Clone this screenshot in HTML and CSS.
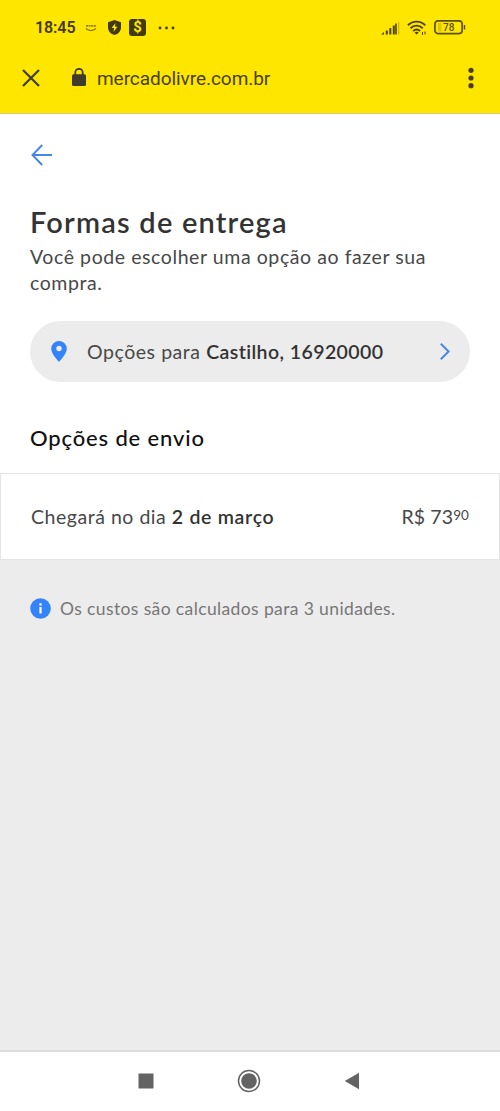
FILE: index.html
```html
<!DOCTYPE html>
<html lang="pt-BR">
<head>
<meta charset="utf-8">
<title>Formas de entrega</title>
<link rel="stylesheet" href="styles.css">
</head>
<body>
<header class="top">
  <div class="status">
    <span class="clock">18:45</span>
    <svg class="smile" width="12" height="8" viewBox="0 0 12 8" fill="none" stroke="#8f7d00"><path d="M1 1.800h10" stroke-width="1.800" stroke-dasharray="2 .6"/><path d="M.8 4.600c2.800 2.600 7.400 2.600 10.200 0" stroke-width="1.300"/></svg>
    <svg class="shield" width="13" height="15" viewBox="0 0 13 15"><path d="M6.500 0 13 2.300v5.200c0 3.700-2.800 6.500-6.500 7.500C2.800 14 0 11.200 0 7.500V2.300z" fill="#43390a"/><path d="M7.400 3 3.700 8h2.400l-.6 4 3.900-5.200H7z" fill="#ffe600"/></svg>
    <span class="cash">$</span>
    <svg class="more" width="17" height="4" viewBox="0 0 17 4" fill="#43390a"><circle cx="2" cy="2" r="1.400"/><circle cx="8.500" cy="2" r="1.400"/><circle cx="15" cy="2" r="1.400"/></svg>
    <svg class="signal" width="19" height="14" viewBox="0 0 19 14" fill="#4d420a"><path d="M0 13.500 3 11v2.500zM4.800 9.500h2v4h-2zM8.300 7h2v6.500h-2zM11.800 4.500h2v9h-2zM14.200 2.500h1.600v11h-1.600z"/><path d="M17 1h1.300v12.500H17z" opacity=".28"/></svg>
    <svg class="wifi" width="20" height="16" viewBox="0 0 20 16" fill="none" stroke="#4d420a" stroke-width="1.900"><path d="M.9 5.300c5-4.900 12.400-4.900 17.400 0M3.500 8.200c3.500-3.400 8.700-3.400 12.200 0M6.100 11c2.100-1.900 4.900-1.900 7 0"/><path d="M7.500 12.400 9.600 14.600l2.100-2.200c-1.200-1-3-1-4.200 0z" fill="#4d420a" stroke="none"/><path d="M15.500 12v3M18 11.500v3" stroke-width="1"/></svg>
    <svg class="battery" width="32" height="15" viewBox="0 0 32 15"><rect x=".9" y=".9" width="27.200" height="12.700" rx="3" fill="none" stroke="#5d500a" stroke-width="1.700"/><path d="M29.700 5h1.500v4.500h-1.500z" fill="#5d500a"/><rect x="4" y="3" width="3.500" height="8.500" fill="#dcc808"/><text x="14.800" y="11.200" text-anchor="middle" class="level">78</text></svg>
  </div>
  <div class="address">
    <svg class="close" width="18" height="18" viewBox="0 0 18 18" fill="none" stroke="#403b2c" stroke-width="2.200"><path d="m1 1 16 16M17 1 1 17"/></svg>
    <svg class="lock" width="14" height="18" viewBox="0 0 14 18"><path d="M3.300 7V4.500a3.700 3.700 0 0 1 7.400 0V7" fill="none" stroke="#403b2c" stroke-width="1.800"/><rect y="6.200" width="14" height="11.800" rx="1.500" fill="#403b2c"/></svg>
    <span class="host">mercadolivre.com.br</span>
    <svg class="kebab" width="6" height="22" viewBox="0 0 6 22" fill="#4d3b10"><circle cx="3" cy="3.300" r="2.600"/><circle cx="3" cy="11" r="2.600"/><circle cx="3" cy="18.700" r="2.600"/></svg>
  </div>
</header>
<main class="page">
  <section class="intro">
    <svg class="back" width="22" height="22" viewBox="0 0 22 22" fill="none" stroke="#4584e8" stroke-width="1.900"><path d="M21 11H1.500M11.200 1 1.500 11l9.700 10"/></svg>
    <h1 class="title">Formas de entrega</h1>
    <p class="lead">Você pode escolher uma opção ao fazer sua<br>compra.</p>
    <div class="place">
      <svg class="pin" width="16" height="21" viewBox="0 0 16 21"><path fill-rule="evenodd" d="M8 0a7.800 7.800 0 0 1 7.800 7.800C15.800 13 8 20.800 8 20.800S.2 13 .2 7.800A7.800 7.800 0 0 1 8 0zm0 4.800a2.700 2.700 0 1 0 0 5.400 2.700 2.700 0 0 0 0-5.400z" fill="#3483fa"/></svg>
      <span class="place-text">Opções para <b class="place-name">Castilho, 16920000</b></span>
      <svg class="chevron" width="10" height="17" viewBox="0 0 10 17" fill="none" stroke="#4584e8" stroke-width="1.900"><path d="m.8.800 7.800 7.700-7.800 7.700"/></svg>
    </div>
    <h2 class="subtitle">Opções de envio</h2>
  </section>
  <section class="option">
    <span class="arrival">Chegará no dia <b class="date">2 de março</b></span>
    <span class="price">R$ 73<span class="cents">90</span></span>
  </section>
  <div class="note">
    <svg width="21" height="21" viewBox="0 0 21 21"><circle cx="10.500" cy="10.500" r="10.300" fill="#3483fa"/><path d="M9.400 8.900h2.200v6.600H9.400zM9.400 5.300h2.200v2.100H9.400z" fill="#fff"/></svg>
    <span class="note-text">Os custos são calculados para 3 unidades.</span>
  </div>
</main>
<nav class="nav">
  <svg width="16" height="16" viewBox="0 0 16 16"><path d="M.5.500h15v15H.5z" fill="#636363"/></svg>
  <svg width="24" height="24" viewBox="0 0 24 24"><circle cx="12" cy="12" r="10.500" fill="none" stroke="#636363" stroke-width="1.500"/><circle cx="12" cy="12" r="7.800" fill="#636363"/></svg>
  <svg width="16" height="18" viewBox="0 0 16 18"><path d="M.8 9 15 .7v16.600z" fill="#636363"/></svg>
</nav>
</body>
</html>
```

FILE: styles.css
```css
* { box-sizing: border-box; }
body { margin: 0; height: 1111px; display: flex; flex-direction: column; background: #ececec; color: #333; font-family: Lato, "Open Sans", sans-serif; }
svg { display: block; flex: none; }
h1, h2, p { margin: 0; }
span { white-space: nowrap; }

.top { height: 114px; background: #ffe600; border-bottom: 1px solid #d9cf6e; font-family: Roboto, sans-serif; }
.status { height: 55px; padding: 0 34px 0 35px; display: flex; align-items: center; color: #43390a; }
.clock { width: 41px; font-size: 16px; font-weight: 600; letter-spacing: -.1px; }
.smile { margin-left: 9px; }
.shield { margin-left: 11px; }
.cash { margin-left: 8px; width: 17px; height: 17px; border-radius: 3px; background: #43390a; color: #ffe600; font-size: 15px; font-weight: 700; line-height: 17px; text-align: center; }
.more { margin-left: 12px; }
.signal { margin-left: auto; }
.wifi { margin-left: 7px; }
.battery { margin-left: 7px; }
.level { font: 500 10px Roboto, sans-serif; fill: #5d500a; }
.address { height: 46px; padding: 0 26px 0 22px; display: flex; align-items: center; }
.lock { margin: -2px 0 0 32px; }
.host { margin-left: 11px; font-size: 19px; letter-spacing: -.05px; color: #493f0c; }
.kebab { margin-left: auto; }

.page { flex: 1; }
.intro { height: 359px; padding: 30px 30px 0 31px; background: #fff; }
.title { margin: 38px 0 0 -1px; font-size: 29px; line-height: 36px; font-weight: 600; letter-spacing: 1.2px; }
.lead { margin: 4px 0 0 -1px; font-size: 19.5px; line-height: 26px; letter-spacing: .58px; color: #484848; }
.place { margin: 25px 0 0 -1px; height: 61px; padding: 0 20px 0 21px; display: flex; align-items: center; border-radius: 31px; background: #ececec; font-size: 19.5px; letter-spacing: .55px; color: #484848; }
.place-text { margin-left: 20px; }
.place-name, .date { font-weight: 600; color: #333; }
.place-name { letter-spacing: .42px; }
.chevron { margin-left: auto; }
.subtitle { margin: 41px 0 0 -1px; font-size: 22px; line-height: 30px; font-weight: 500; letter-spacing: .85px; color: #111; }
.option { height: 87px; padding: 0 30px; display: flex; align-items: center; justify-content: space-between; background: #fff; border: 1px solid #e4e4e4; font-size: 19.5px; letter-spacing: .53px; color: #484848; }
.date { letter-spacing: .7px; }
.price { letter-spacing: .1px; }
.cents { font-size: 13.5px; position: relative; top: -4px; }
.note { margin: 38px 0 0 30px; display: flex; align-items: center; gap: 9px; font-size: 17.5px; letter-spacing: .38px; color: #777; }
.nav { height: 61px; padding: 0 140px 2px 138px; display: flex; align-items: center; justify-content: space-between; background: #fff; border-top: 2px solid #dcdcdc; }
```
